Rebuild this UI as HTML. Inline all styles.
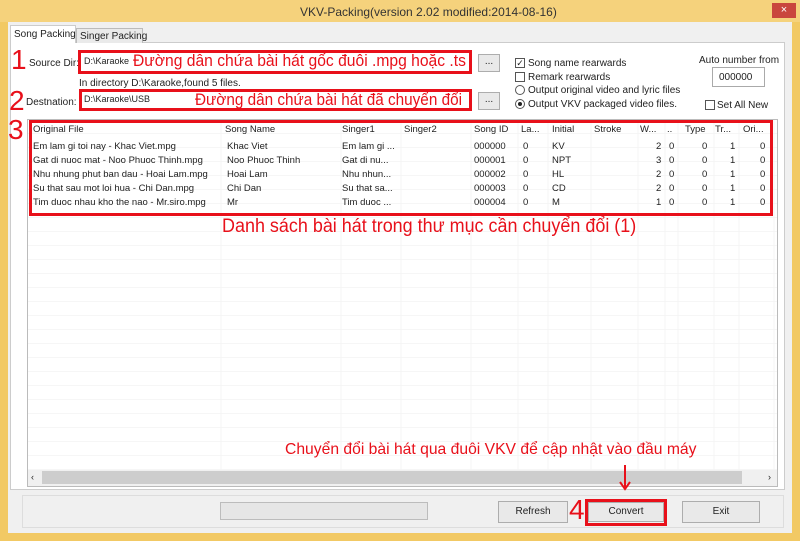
<!DOCTYPE html>
<html><head><meta charset="utf-8"><style>
*{margin:0;padding:0;box-sizing:border-box}
body{width:800px;height:541px;background:#f2c964;position:relative;overflow:hidden;font-family:"Liberation Sans","DejaVu Sans",sans-serif;font-size:10px;color:#222}
.a{position:absolute;white-space:nowrap}
.red{color:#e8101a;font-family:"Liberation Sans",sans-serif;transform-origin:0 0}
.rb{position:absolute;border:3px solid #e8101a}
.btn{position:absolute;background:#e9e9e9;border:1px solid #adadad;text-align:center;font-size:10px}
.cb{position:absolute;width:10px;height:10px;border:1px solid #555;background:#fff}
.rd{position:absolute;width:10px;height:10px;border:1px solid #555;border-radius:50%;background:#fff}
</style></head><body>
<div class="a" style="left:0;top:0;width:800px;height:22px;background:#f5d27c"></div>
<div class="a" style="left:300px;top:5px;font-size:12px;color:#333">VKV-Packing(version 2.02 modified:2014-08-16)</div>
<div class="a" style="left:772px;top:3px;width:24px;height:15px;background:#c9463d;color:#fff;font-size:11px;text-align:center;line-height:15px">×</div>
<div class="a" style="left:8px;top:22px;width:784px;height:511px;background:#f0f0f0"></div>
<div class="a" style="left:10px;top:42px;width:775px;height:448px;background:#fff;border:1px solid #ccc"></div>
<div class="a" style="left:10px;top:25px;width:66px;height:18px;background:#fff;border:1px solid #ccc;border-bottom:none;padding:3px 0 0 3px">Song Packing</div>
<div class="a" style="left:76px;top:28px;width:67px;height:15px;background:#eaeaea;border:1px solid #bbb;border-bottom:none;padding:2px 0 0 3px">Singer Packing</div>
<div class="a red" style="left:11px;top:44px;font-size:28px">1</div>
<div class="a" style="left:29px;top:58px">Source Dir:</div>
<div class="rb" style="left:78px;top:50px;width:394px;height:24px;background:#fff"></div>
<div class="a" style="left:84px;top:56px;font-size:9px">D:\Karaoke</div>
<div class="a red" style="left:133px;top:51px;font-size:17px;transform:scaleX(0.92)">Đường dẫn chứa bài hát gốc đuôi .mpg hoặc .ts</div>
<div class="a" style="left:79px;top:78px">In directory D:\Karaoke,found 5 files.</div>
<div class="a red" style="left:9px;top:85px;font-size:28px">2</div>
<div class="a" style="left:26px;top:97px">Destnation:</div>
<div class="rb" style="left:79px;top:89px;width:393px;height:22px;background:#fff"></div>
<div class="a" style="left:84px;top:94px;font-size:9px">D:\Karaoke\USB</div>
<div class="a red" style="left:195px;top:90px;font-size:17px;transform:scaleX(0.9)">Đường dẫn chứa bài hát đã chuyển đổi</div>
<div class="btn" style="left:478px;top:54px;width:22px;height:18px;line-height:14px">...</div>
<div class="btn" style="left:478px;top:92px;width:22px;height:18px;line-height:14px">...</div>
<div class="cb" style="left:515px;top:58px;font-size:9px;line-height:8px;text-align:center">✓</div>
<div class="a" style="left:528px;top:58px">Song name rearwards</div>
<div class="cb" style="left:515px;top:72px"></div>
<div class="a" style="left:528px;top:72px">Remark rearwards</div>
<div class="rd" style="left:515px;top:85px"></div>
<div class="a" style="left:528px;top:85px">Output original video and lyric files</div>
<div class="rd" style="left:515px;top:99px"><div style="width:4px;height:4px;background:#222;border-radius:50%;margin:2px"></div></div>
<div class="a" style="left:528px;top:99px">Output VKV packaged video files.</div>
<div class="a" style="left:699px;top:55px">Auto number from</div>
<div class="a" style="left:712px;top:67px;width:53px;height:20px;background:#fff;border:1px solid #aaa;padding:4px 0 0 6px">000000</div>
<div class="cb" style="left:705px;top:100px"></div>
<div class="a" style="left:717px;top:100px">Set All New</div>
<div class="a red" style="left:8px;top:114px;font-size:28px">3</div>
<div class="a" style="left:27px;top:119px;width:751px;height:368px;background:#fff;border:1px solid #bbb;overflow:hidden;
background-image:repeating-linear-gradient(to bottom,transparent 0,transparent 13px,#f6f6f6 13px,#f6f6f6 14px)">
<svg width="751" height="368" style="position:absolute;left:0;top:0"><g stroke="#f4f4f4">
<line x1="193" y1="0" x2="193" y2="350"/><line x1="313" y1="0" x2="313" y2="350"/><line x1="373" y1="0" x2="373" y2="350"/><line x1="443" y1="0" x2="443" y2="350"/><line x1="490" y1="0" x2="490" y2="350"/><line x1="520" y1="0" x2="520" y2="350"/><line x1="563" y1="0" x2="563" y2="350"/><line x1="610" y1="0" x2="610" y2="350"/><line x1="637" y1="0" x2="637" y2="350"/><line x1="650" y1="0" x2="650" y2="350"/><line x1="686" y1="0" x2="686" y2="350"/><line x1="711" y1="0" x2="711" y2="350"/><line x1="746" y1="0" x2="746" y2="350"/></g></svg>
</div>
<div class="a" style="left:28px;top:470px;width:749px;height:16px;background:#f0f0f0"></div>
<div class="a" style="left:42px;top:471px;width:700px;height:13px;background:#cdcdcd"></div>
<div class="a" style="left:31px;top:472px;font-size:9px">‹</div><div class="a" style="left:768px;top:472px;font-size:9px">›</div>
<div style="position:absolute;left:27px;top:119px;font-size:9.5px">
<div class="a" style="left:6px;top:5px">Original File</div><div class="a" style="left:198px;top:5px">Song Name</div><div class="a" style="left:315px;top:5px">Singer1</div><div class="a" style="left:377px;top:5px">Singer2</div><div class="a" style="left:447px;top:5px">Song ID</div><div class="a" style="left:494px;top:5px">La...</div><div class="a" style="left:525px;top:5px">Initial</div><div class="a" style="left:567px;top:5px">Stroke</div><div class="a" style="left:613px;top:5px">W...</div><div class="a" style="left:640px;top:5px">..</div><div class="a" style="left:658px;top:5px">Type</div><div class="a" style="left:688px;top:5px">Tr...</div><div class="a" style="left:716px;top:5px">Ori...</div>
</div>
<div style="position:absolute;left:27px;top:140px;font-size:9.5px;line-height:14px">
<div class="a" style="left:6px;top:0">Em lam gi toi nay - Khac Viet.mpg<br>Gat di nuoc mat - Noo Phuoc Thinh.mpg<br>Nhu nhung phut ban dau - Hoai Lam.mpg<br>Su that sau mot loi hua - Chi Dan.mpg<br>Tim duoc nhau kho the nao - Mr.siro.mpg</div>
<div class="a" style="left:200px;top:0">Khac Viet<br>Noo Phuoc Thinh<br>Hoai Lam<br>Chi Dan<br>Mr</div>
<div class="a" style="left:315px;top:0">Em lam gi ...<br>Gat di nu...<br>Nhu nhun...<br>Su that sa...<br>Tim duoc ...</div>
<div class="a" style="left:447px;top:0">000000<br>000001<br>000002<br>000003<br>000004</div>
<div class="a" style="left:496px;top:0">0<br>0<br>0<br>0<br>0</div>
<div class="a" style="left:525px;top:0">KV<br>NPT<br>HL<br>CD<br>M</div>
<div class="a" style="left:629px;top:0">2<br>3<br>2<br>2<br>1</div>
<div class="a" style="left:642px;top:0">0<br>0<br>0<br>0<br>0</div>
<div class="a" style="left:675px;top:0">0<br>0<br>0<br>0<br>0</div>
<div class="a" style="left:703px;top:0">1<br>1<br>1<br>1<br>1</div>
<div class="a" style="left:733px;top:0">0<br>0<br>0<br>0<br>0</div>
</div>
<div class="rb" style="left:29px;top:120px;width:744px;height:96px"></div>
<div class="a red" style="left:222px;top:216px;font-size:19px;transform:scaleX(0.945)">Danh sách bài hát trong thư mục cần chuyển đổi (1)</div>
<div class="a red" style="left:285px;top:441px;font-size:16px;transform:scaleX(0.98)">Chuyển đổi bài hát qua đuôi VKV để cập nhật vào đầu máy</div>
<svg class="a" style="left:618px;top:465px" width="14" height="26"><line x1="7" y1="0" x2="7" y2="22" stroke="#e8101a" stroke-width="2"/><path d="M2 17 L7 24 L12 17" fill="none" stroke="#e8101a" stroke-width="2"/></svg>
<div class="a" style="left:22px;top:495px;width:762px;height:33px;border:1px solid #ddd;background:#f0f0f0"></div>
<div class="a" style="left:220px;top:502px;width:208px;height:18px;background:#e6e6e6;border:1px solid #bcbcbc"></div>
<div class="btn" style="left:498px;top:501px;width:70px;height:22px;line-height:20px">Refresh</div>
<div class="a red" style="left:569px;top:494px;font-size:28px">4</div>
<div class="btn" style="left:588px;top:502px;width:76px;height:20px;line-height:18px">Convert</div>
<div class="rb" style="left:585px;top:499px;width:82px;height:27px;background:transparent"></div>
<div class="btn" style="left:682px;top:501px;width:78px;height:22px;line-height:20px">Exit</div>
</body></html>
